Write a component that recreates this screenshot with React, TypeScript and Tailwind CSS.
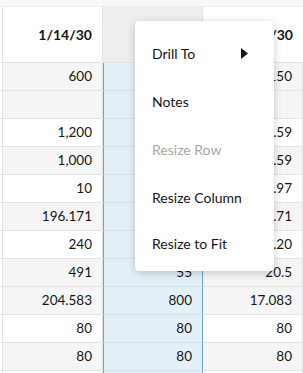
import { ReactNode } from "react";

type Row = { a: string; b: string; c: string; shaded: boolean };

const rows: Row[] = [
  { a: "600", b: "", c: "150", shaded: true },
  { a: "", b: "", c: "", shaded: true },
  { a: "1,200", b: "", c: "2.59", shaded: false },
  { a: "1,000", b: "", c: "1.59", shaded: true },
  { a: "10", b: "", c: "0.97", shaded: false },
  { a: "196.171", b: "", c: "1.71", shaded: true },
  { a: "240", b: "", c: "3.20", shaded: false },
  { a: "491", b: "55", c: "20.5", shaded: true },
  { a: "204.583", b: "800", c: "17.083", shaded: true },
  { a: "80", b: "80", c: "80", shaded: false },
  { a: "80", b: "80", c: "80", shaded: true },
  { a: "", b: "", c: "", shaded: false },
];

function Cell({ children, shaded }: { children?: ReactNode; shaded: boolean }) {
  return (
    <div
      className={`flex h-[28px] w-[100px] shrink-0 items-center justify-end border-r border-b border-[#e3e3e3] pr-[10px] ${
        shaded ? "bg-[#f5f5f5]" : "bg-white"
      }`}
    >
      {children}
    </div>
  );
}

const menuItems = [
  { label: "Drill To", sub: true },
  { label: "Notes" },
  { label: "Resize Row", disabled: true },
  { label: "Resize Column" },
  { label: "Resize to Fit", last: true },
];

export default function App() {
  return (
    <div
      className="relative h-[373px] w-[303px] overflow-hidden bg-white text-[13.5px] text-[#161513]"
      style={{ fontFamily: "Lato, 'Noto Sans', sans-serif" }}
    >
      <div className="h-[7px] border-b border-[#ececec] bg-[#f8f8f8]" />
      <div className="flex h-[56px] border-b border-[#e3e3e3]">
        <div className="w-[3px] shrink-0 border-r border-[#e3e3e3]" />
        <div className="flex w-[100px] shrink-0 items-center justify-end border-r border-[#e3e3e3] pr-[10px] text-[14px] font-bold">
          1/14/30
        </div>
        <div className="w-[100px] shrink-0 border-r border-[#e3e3e3] bg-[#eeeeee]" />
        <div className="flex w-[100px] shrink-0 items-center justify-end pr-[10px] text-[14px] font-bold">1/21/30</div>
      </div>
      {rows.map((r, i) => (
        <div key={i} className="flex">
          <div className="h-[28px] w-[3px] shrink-0 border-r border-b border-[#e3e3e3] bg-white" />
          <Cell shaded={r.shaded}>{r.a}</Cell>
          <div className="flex h-[28px] w-[100px] shrink-0 items-center justify-end border-x border-b border-x-[#6aa3c4] border-b-[#d2e1ea] bg-[#e4f0f7] pr-[10px]">
            {r.b}
          </div>
          <Cell shaded={r.shaded}>{r.c}</Cell>
        </div>
      ))}

      <div className="absolute top-[21px] left-[135px] w-[139px] rounded-[4px] bg-white pt-[8px] shadow-[0_2px_8px_rgba(0,0,0,0.2)]">
        {menuItems.map((m) => (
          <div
            key={m.label}
            className={`flex items-center justify-between pr-[26px] pl-[17px] text-[14px] ${m.last ? "h-[50px] pb-[6px]" : "h-[48px]"} ${
              m.disabled ? "text-[#a7a7a7]" : "text-[#161513]"
            }`}
          >
            <span>{m.label}</span>
            {m.sub && (
              <svg width="7" height="11" viewBox="0 0 7 11">
                <path d="M0 0 L7 5.5 L0 11 Z" fill="#161513" />
              </svg>
            )}
          </div>
        ))}
      </div>
    </div>
  );
}
